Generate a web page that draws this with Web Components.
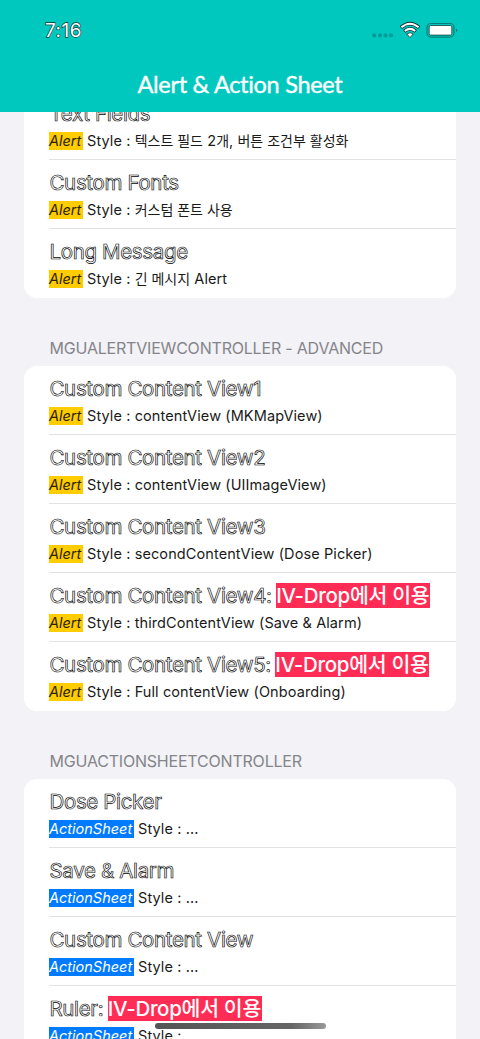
<!DOCTYPE html>
<html lang="ko"><head><meta charset="utf-8"><title>Alert &amp; Action Sheet</title>
<style>
html,body{margin:0;height:100%;overflow:hidden;background:#f2f2f7}
body{font-family:Inter,"Noto Sans CJK KR",sans-serif;color:#1c1c1e}
</style></head><body>
<app-screen>
 <nav-header slot="header" time="7:16">Alert &amp; Action Sheet</nav-header>
 <list-section>
  <list-row kind="Alert" note="텍스트 필드 2개, 버튼 조건부 활성화">Text Fields</list-row>
  <list-row kind="Alert" note="커스텀 폰트 사용">Custom Fonts</list-row>
  <list-row kind="Alert" note="긴 메시지 Alert" last>Long Message</list-row>
 </list-section>
 <list-section heading="MGUALERTVIEWCONTROLLER - ADVANCED">
  <list-row kind="Alert" note="contentView (MKMapView)">Custom Content View1</list-row>
  <list-row kind="Alert" note="contentView (UIImageView)">Custom Content View2</list-row>
  <list-row kind="Alert" note="secondContentView (Dose Picker)">Custom Content View3</list-row>
  <list-row kind="Alert" note="thirdContentView (Save &amp; Alarm)" tag="IV-Drop에서 이용">Custom Content View4:</list-row>
  <list-row kind="Alert" note="Full contentView (Onboarding)" tag="IV-Drop에서 이용" last>Custom Content View5:</list-row>
 </list-section>
 <list-section heading="MGUACTIONSHEETCONTROLLER">
  <list-row kind="ActionSheet" note="...">Dose Picker</list-row>
  <list-row kind="ActionSheet" note="...">Save &amp; Alarm</list-row>
  <list-row kind="ActionSheet" note="...">Custom Content View</list-row>
  <list-row kind="ActionSheet" note="..." tag="IV-Drop에서 이용">Ruler:</list-row>
 </list-section>
</app-screen>
<script>
class Base extends HTMLElement{
  connectedCallback(){ if(!this.shadowRoot) this.attachShadow({mode:'open'}).innerHTML=this.render(); }
  attr(n){ return (this.getAttribute(n)||'').replace(/&/g,'&amp;'); }
}
customElements.define('app-screen',class extends Base{render(){return `
<style>
:host{display:flex;flex-direction:column;position:relative;width:480px;height:1039px;overflow:hidden;background:#f2f2f7}
main{flex:1;min-height:0;overflow:hidden}
.scroll{margin:-21px 24px 0}
.home{position:absolute;left:155px;top:1023px;width:171px;height:6px;border-radius:3px;background:linear-gradient(90deg,#555,#666 80%,#999)}
</style>
<slot name="header"></slot><main><div class="scroll"><slot></slot></div></main><div class="home"></div>`}});
customElements.define('nav-header',class extends Base{render(){return `
<style>
:host{display:flex;flex-direction:column;flex:none;height:112px;background:#00c8be;box-sizing:border-box}
.status{display:flex;align-items:center;height:60px;padding:0 22px 0 45px}
.time{font-size:19px;line-height:22px;letter-spacing:.5px;color:#fff;-webkit-text-stroke:1.3px #17302f;paint-order:stroke fill;flex:1;padding-top:2px}
svg{display:block}
.title{font:400 23.500px/30px Lato,sans-serif;letter-spacing:-.3px;text-align:center;color:#fff;-webkit-text-stroke:.4px #fff;margin-top:9px;white-space:nowrap}
</style>
<div class="status"><span class="time">${this.attr('time')}</span>
<svg width="88" height="20" viewBox="370 20 88 20">
<g fill="#009d98"><circle cx="374" cy="35.4" r="2.1"/><circle cx="380" cy="35.4" r="2.1"/><circle cx="385.500" cy="35.4" r="2.1"/><circle cx="391" cy="35.4" r="2.1"/></g>
<g fill="none"><g stroke="#102b2a" stroke-width="3.500"><path d="M400.900 27.600Q410 19.600 419.100 27.600M404.200 31.300Q410 26.500 415.800 31.300"/></g><path d="M406.700 34Q410 31.300 413.300 34L410 37.500Z" fill="#fff" stroke="#102b2a" stroke-width=".8"/><g stroke="#fff" stroke-width="2.100"><path d="M401.400 27.300Q410 20.200 418.600 27.300M404.800 31Q410 26.900 415.200 31"/></g></g>
<rect x="427" y="23.500" width="27" height="13.600" rx="4" fill="none" stroke="#087d78" stroke-width="1.200"/>
<rect x="429.200" y="25.500" width="22.600" height="9.600" rx="1.500" fill="#fff" stroke="#123c3a" stroke-width=".8"/>
<path d="M456 28.400Q458.500 30.300 456 32.200Z" fill="#087d78"/>
</svg></div>
<div class="title"><slot></slot></div>`}});
customElements.define('list-section',class extends Base{render(){const h=this.attr('heading');return `
<style>
:host{display:block}
.heading{height:68px;box-sizing:border-box;padding:40px 0 0 25.500px;font-size:16px;line-height:20px;letter-spacing:-.2px;color:#858589;white-space:nowrap}
.card{background:#fff;border-radius:13px;overflow:hidden}
</style>
${h?`<div class="heading">${h}</div>`:''}<div class="card"><slot></slot></div>`}});
customElements.define('list-row',class extends Base{render(){
 const t=this.attr('tag'),k=this.attr('kind');
 const note=this.attr('note').replace(/[\uac00-\ud7a3]+( [\uac00-\ud7a3]+)*/g,'<span class="ko">$&</span>');
 return `
<style>
:host{display:flex;flex-direction:column;gap:6px;height:69px;box-sizing:border-box;padding:10px 0 0 25px;position:relative}
:host::after{content:"";position:absolute;left:25px;right:0;bottom:0;height:1px;background:#e2e2e4}
:host([last])::after{display:none}
.title,.sub{display:flex;white-space:nowrap}
.title{height:25px;line-height:26px;font-size:20.500px;gap:4.500px}
.name{color:#fff;-webkit-text-stroke:.65px #000;letter-spacing:-.35px;padding-left:.5px}
.tag{background:#ff2d55;color:#fff;font-weight:500;width:154px;letter-spacing:-.3px;line-height:25px}
.sub{height:18px;line-height:18px;font-size:14.500px;gap:4px;color:#1a1a1a}
.kind{font-style:italic;box-sizing:border-box;width:34px;background:#ffcc00;color:#2b2300}
.kind.ActionSheet{width:85px;background:#007aff;color:#fff}
.note{letter-spacing:.1px}
.ko{font-size:14px;letter-spacing:0}
</style>
<div class="title"><span class="name"><slot></slot></span>${t?`<span class="tag">${t}</span>`:''}</div>
<div class="sub"><span class="kind ${k}">${k}</span><span class="note">Style : ${note}</span></div>`}});
</script></body></html>
